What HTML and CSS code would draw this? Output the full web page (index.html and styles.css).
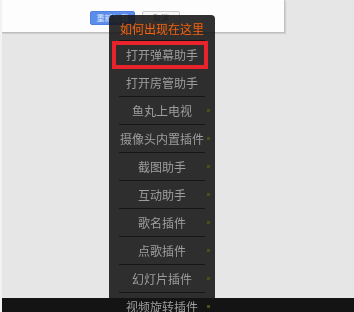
FILE: index.html
```html
<!DOCTYPE html>
<html lang="zh">
<head>
  <meta charset="UTF-8" />
  <title>插件菜单</title>
  <link rel="stylesheet" href="styles.css">
</head>
<body>
  <div class="panel">
    <div class="actions">
      <button class="btn btn-primary">重新加载</button>
      <button class="btn">取消</button>
    </div>
  </div>

  <div class="menu">
    <div class="menu-title">如何出现在这里</div>
    <ul class="menu-list">
      <li class="menu-item marked">打开弹幕助手</li>
      <li class="menu-item">打开房管助手</li>
      <li class="menu-item dot">鱼丸上电视</li>
      <li class="menu-item dot">摄像头内置插件</li>
      <li class="menu-item dot">截图助手</li>
      <li class="menu-item dot">互动助手</li>
      <li class="menu-item dot">歌名插件</li>
      <li class="menu-item dot">点歌插件</li>
      <li class="menu-item dot">幻灯片插件</li>
      <li class="menu-item dot">视频旋转插件</li>
    </ul>
  </div>

  <div class="bottom-bar"></div>
</body>
</html>
```
FILE: styles.css
```css
body {
  margin: 0;
  height: 312px;
  overflow: hidden;
  background: #e6e6e6;
  border-left: 2px solid #f2f2f2;
  font-family: "Noto Sans CJK SC", "Liberation Sans", sans-serif;
}
.panel {
  width: 282px;
  height: 32px;
  background: #fdfdfd;
  border-right: 1px solid #c4c4c4;
  border-bottom: 1px solid #bdbdbd;
  box-shadow: 1px 1px 1px #d0d0d0;
}
.actions {
  display: flex;
  gap: 7px;
  padding: 11px 0 0 88px;
}
.btn {
  width: 38px;
  height: 14px;
  padding: 0;
  font-family: inherit;
  font-size: 8px;
  line-height: 12px;
  color: #777;
  background: #f7f7f7;
  border: 1px solid #c9c9c9;
  border-radius: 2px;
}
.btn-primary {
  width: 45px;
  color: #dbe6fb;
  background: #5b8ded;
  border-color: #4f80e0;
}

/* 菜单 */
.menu {
  position: absolute;
  left: 109px;
  top: 15px;
  width: 106px;
  height: 320px;
  background: rgba(20, 20, 20, 0.88);
  border-radius: 4px 4px 0 0;
  z-index: 2;
}
.menu-title {
  height: 25px;
  line-height: 28px;
  text-align: center;
  font-size: 12px;
  color: #e8651a;
  text-shadow: 0 0 1px #6a2800;
  border-bottom: 1px solid #141414;
  margin: 0 10px;
}
.menu-list {
  list-style: none;
  margin: 0;
  padding: 0;
}
.menu-item {
  position: relative;
  height: 27px;
  line-height: 27px;
  margin: 0 10px;
  text-align: center;
  font-size: 12px;
  color: #9d9d9d;
  border-bottom: 1px solid #151515;
  white-space: nowrap;
}
.menu-item.dot::after {
  content: "";
  position: absolute;
  right: -5px;
  top: 12px;
  width: 3px;
  height: 3px;
  background: #4d4d1c;
}
.menu-item.marked::before {
  content: "";
  position: absolute;
  left: -7px;
  right: -3px;
  top: 0;
  bottom: -1px;
  border: 4px solid #e8232b;
}

.bottom-bar {
  position: fixed;
  left: 2px;
  right: 0;
  bottom: 0;
  height: 14px;
  background: #141414;
  z-index: 1;
}
```
